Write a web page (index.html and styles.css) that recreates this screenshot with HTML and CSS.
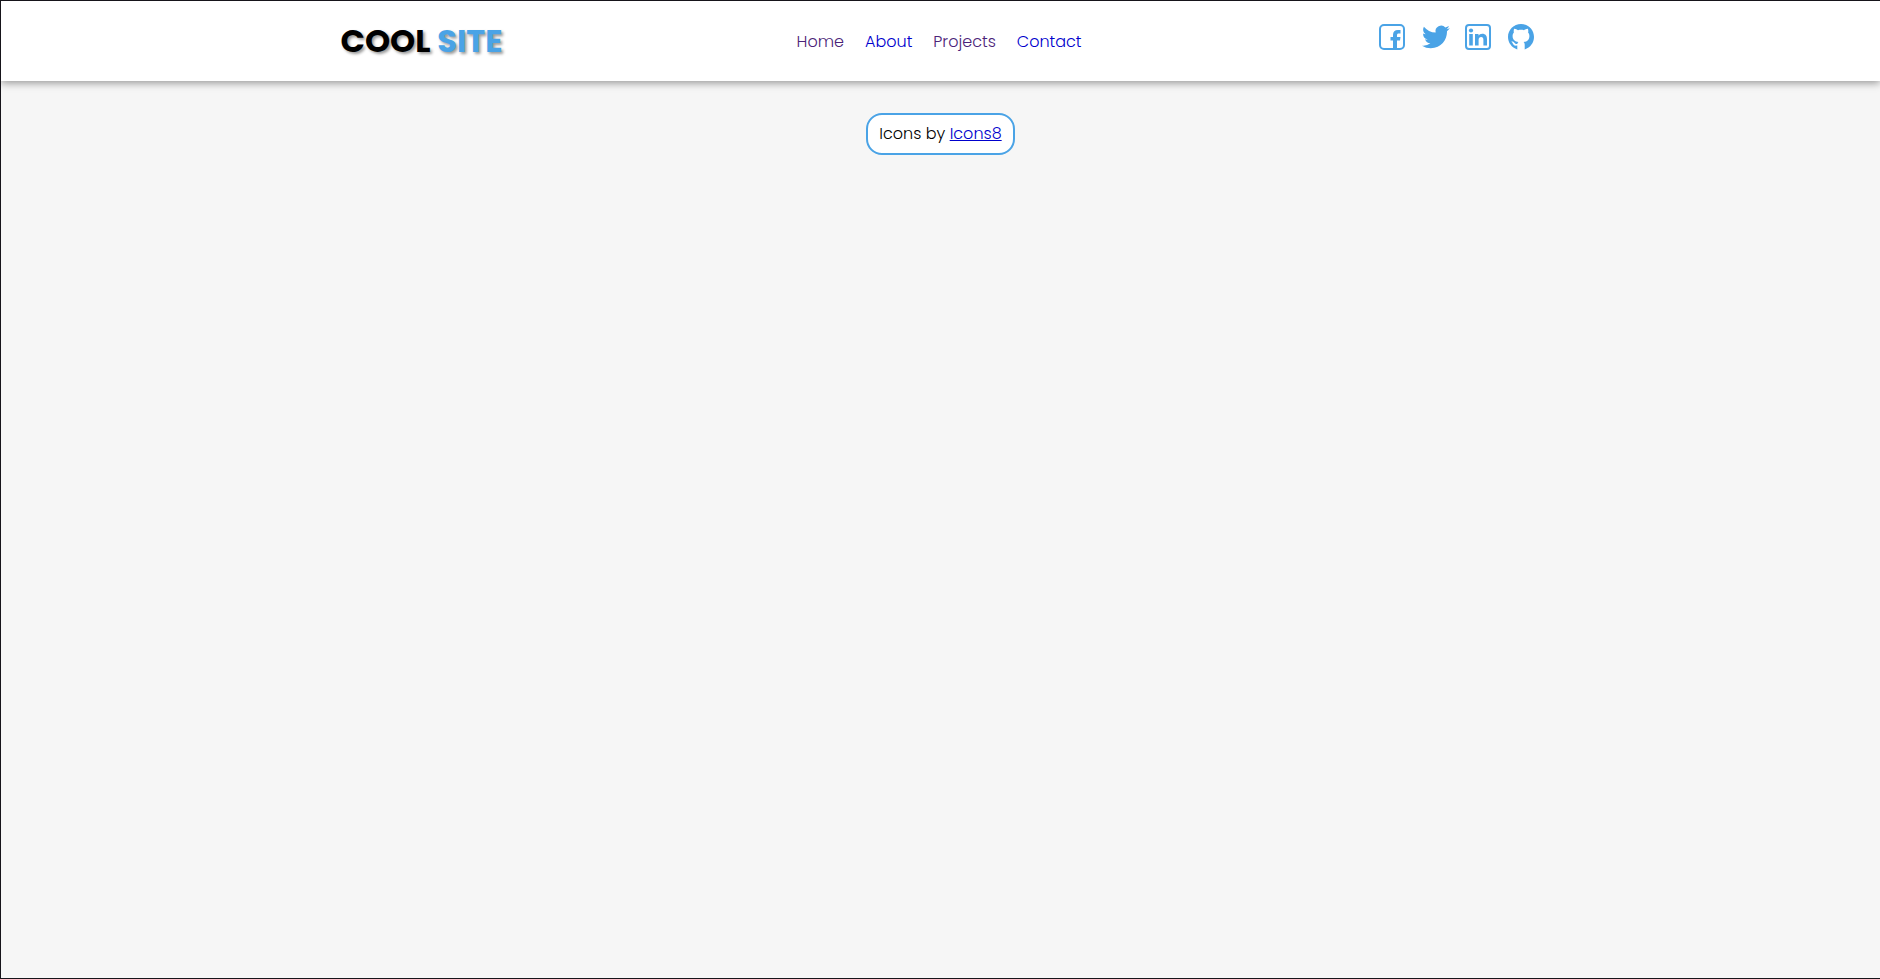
FILE: index.html
```html
<!DOCTYPE html>
<html lang="en">
<head>
<meta charset="utf-8">
<meta name="viewport" content="width=device-width, initial-scale=1">
<title>Cool Site</title>
<link rel="stylesheet" href="styles.css">
</head>
<body>
<header class="header">
  <div class="header-inner">
    <h1 class="logo">COOL <span class="logo-accent">SITE</span></h1>
    <nav class="nav">
      <a class="nav-link visited" href="#home">Home</a>
      <a class="nav-link" href="#about">About</a>
      <a class="nav-link visited" href="#projects">Projects</a>
      <a class="nav-link" href="#contact">Contact</a>
    </nav>
    <div class="social">
      <a class="social-link" href="#facebook" aria-label="Facebook"><svg class="icon" viewBox="0 0 32 32"><rect x="4" y="4" width="24" height="24" rx="4" fill="none" stroke="currentColor" stroke-width="2"/><path d="M17 28V19.500H14.500V16H17V14C17 10.800 18.800 9 22 9H24.500V12.500H22.800C21.500 12.500 21 13.100 21 14.500V16H24.500L24 19.500H21V28Z" fill="currentColor"/></svg></a>
      <a class="social-link" href="#twitter" aria-label="Twitter"><svg class="icon" viewBox="0 0 32 32"><path transform="translate(3 2) scale(1.160)" d="M23.950 4.570a10 10 0 0 1-2.820.77 4.960 4.960 0 0 0 2.160-2.720 9.900 9.900 0 0 1-3.120 1.190 4.920 4.920 0 0 0-8.390 4.480C7.690 8.090 4.070 6.130 1.640 3.160a4.820 4.820 0 0 0-.67 2.470c0 1.710.87 3.210 2.190 4.100a4.900 4.900 0 0 1-2.230-.62v.06a4.920 4.920 0 0 0 3.950 4.830 5 5 0 0 1-2.210.08 4.940 4.940 0 0 0 4.600 3.420A9.870 9.870 0 0 1 0 19.540a13.990 13.990 0 0 0 7.560 2.210c9.050 0 13.990-7.500 13.990-13.980 0-.21 0-.42-.02-.63a9.940 9.940 0 0 0 2.460-2.550z" fill="currentColor"/></svg></a>
      <a class="social-link" href="#linkedin" aria-label="LinkedIn"><svg class="icon" viewBox="0 0 32 32"><rect x="4" y="4" width="24" height="24" rx="3" fill="none" stroke="currentColor" stroke-width="2"/><circle cx="9" cy="9.500" r="2.100" fill="currentColor"/><path d="M7.200 13H10.800V24.500H7.200ZM13 13H16.500V14.600C17.200 13.500 18.500 12.700 20.300 12.700C23.600 12.700 25 14.800 25 18V24.500H21.400V18.700C21.400 16.900 20.700 16 19.200 16C17.500 16 16.600 17.100 16.600 18.900V24.500H13Z" fill="currentColor"/></svg></a>
      <a class="social-link" href="#github" aria-label="GitHub"><svg class="icon" viewBox="0 0 32 32"><path d="M16 3C8.800 3 3 8.800 3 16C3 21.600 6.600 26.500 12.300 28.500V24.500C8.900 25.200 8.100 23.100 7.800 22.400C7.400 21.500 6.600 21.100 6.300 20.800C7.700 20.100 8.900 21 9.600 22C10.300 23 11.100 23.200 12.400 22.700C12.600 21.900 12.900 21.400 13.400 21C10.100 20.500 7.600 18.900 7.600 14.900C7.600 13.400 8.100 12.300 8.900 11.400C8.600 10.400 8.600 8.900 9.200 7.700C10.600 7.600 11.900 8.400 13 9.200C15 8.700 17 8.700 19 9.200C20.100 8.400 21.400 7.600 22.800 7.700C23.400 8.900 23.400 10.400 23.100 11.400C23.900 12.300 24.400 13.400 24.400 14.900C24.400 18.900 21.900 20.500 18.600 21C19.300 21.600 19.700 22.500 19.700 23.600V28.500C25.400 26.500 29 21.600 29 16C29 8.800 23.200 3 16 3Z" fill="currentColor"/></svg></a>
    </div>
  </div>
</header>
<main class="main">
  <p class="credit">Icons by <a class="credit-link" href="#icons8">Icons8</a></p>
</main>
</body>
</html>
```
FILE: styles.css
```css
* {
  box-sizing: border-box;
  margin: 0;
  padding: 0;
}

body {
  min-height: 100vh;
  border: 1px solid #16141a;
  border-right: 0;
  background: #f6f6f6;
  color: #000;
  font-family: Poppins, Inter, "Open Sans", sans-serif;
  font-size: 16px;
  font-weight: 300;
  line-height: 24px;
}

.header {
  background: #fff;
  box-shadow: 0 2px 8px rgba(0, 0, 0, 0.4);
  clip-path: inset(0 0 -16px 0);
}

.header-inner {
  display: flex;
  justify-content: space-between;
  align-items: center;
  max-width: 1200px;
  min-height: 80px;
  margin: 0 auto;
}

.logo {
  font-size: 32px;
  font-weight: 700;
  line-height: 48px;
  text-shadow: 2px 2px 3px rgba(0, 0, 0, 0.4);
}

.logo-accent {
  color: #4aa3e6;
}

.nav {
  display: flex;
  gap: 21px;
  padding-top: 2px;
}

.nav-link {
  color: #0000cd;
  text-decoration: none;
}

.nav-link.visited {
  color: #4b2378;
}

.social {
  display: flex;
  gap: 11px;
  padding: 0 4px 8px 0;
}

.social-link {
  display: block;
  color: #4aa3e6;
}

.icon {
  display: block;
  width: 32px;
  height: 32px;
}

.main {
  display: flex;
  justify-content: center;
  padding: 32px 16px;
}

.credit {
  padding: 7px 11px;
  border: 2px solid #4aa3e6;
  border-radius: 16px;
  background: #fff;
  line-height: 24px;
}

.credit-link {
  color: #0000cd;
}
```
